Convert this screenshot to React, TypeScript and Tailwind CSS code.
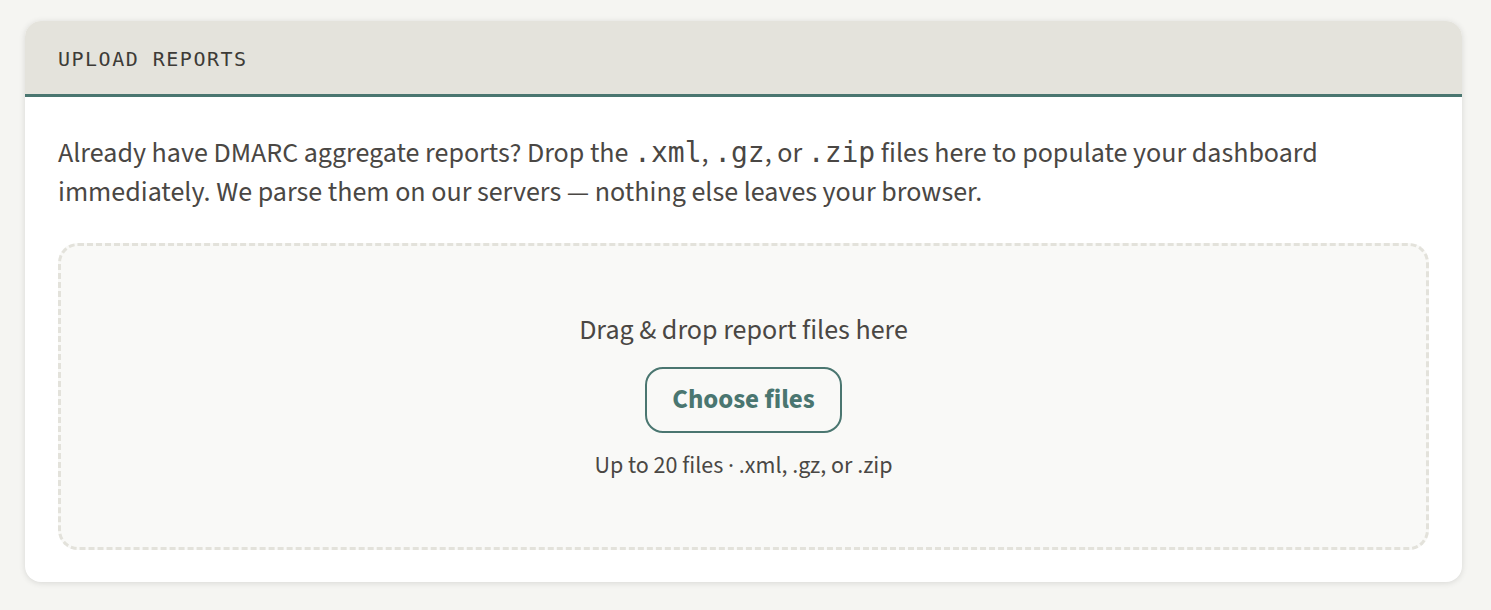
import React from 'react';

const sans = { fontFamily: '"Source Sans 3", "Noto Sans", "Open Sans", sans-serif' };
const mono = { fontFamily: '"DejaVu Sans Mono", "Liberation Mono", monospace' };

export default function App() {
  return (
    <div className="min-h-[610px] w-full bg-[#f5f5f2] pl-[25px] pr-[29px] pt-[21px]" style={sans}>
      <div className="overflow-hidden rounded-[16px] bg-white shadow-[0_1px_6px_rgba(0,0,0,0.12)]">
        {/* Header */}
        <div className="flex h-[76px] items-center border-b-[3px] border-[#4a7670] bg-[#e4e3dc] px-[33px] pt-[3px]">
          <h2 className="text-[20px] tracking-[1.5px] text-[#3d3b37]" style={mono}>
            UPLOAD REPORTS
          </h2>
        </div>

        {/* Body */}
        <div className="px-[33px] pb-[32px] pt-[36px]">
          <p className="text-[28px] leading-[39px] text-[#4a4744]">
            Already have DMARC aggregate reports? Drop the{' '}
            <code className="text-[28px]" style={mono}>.xml</code>,{' '}
            <code className="text-[28px]" style={mono}>.gz</code>, or{' '}
            <code className="text-[28px]" style={mono}>.zip</code> files here to populate your dashboard
            immediately. We parse them on our servers — nothing else leaves your browser.
          </p>

          <div className="mt-[31px] flex h-[307px] flex-col items-center justify-center rounded-[20px] border-[3px] border-dashed border-[#e3e2db] bg-[#f9f9f7]">
            <p className="text-[28px] leading-[36px] text-[#4a4744]">Drag &amp; drop report files here</p>
            <button className="mt-[19px] h-[66px] rounded-[18px] border-2 border-[#4a7670] px-[25px] text-[27px] font-bold text-[#4a7670]">
              Choose files
            </button>
            <p className="mt-[18px] text-[24px] leading-[30px] text-[#4a4744]">Up to 20 files · .xml, .gz, or .zip</p>
          </div>
        </div>
      </div>
    </div>
  );
}
